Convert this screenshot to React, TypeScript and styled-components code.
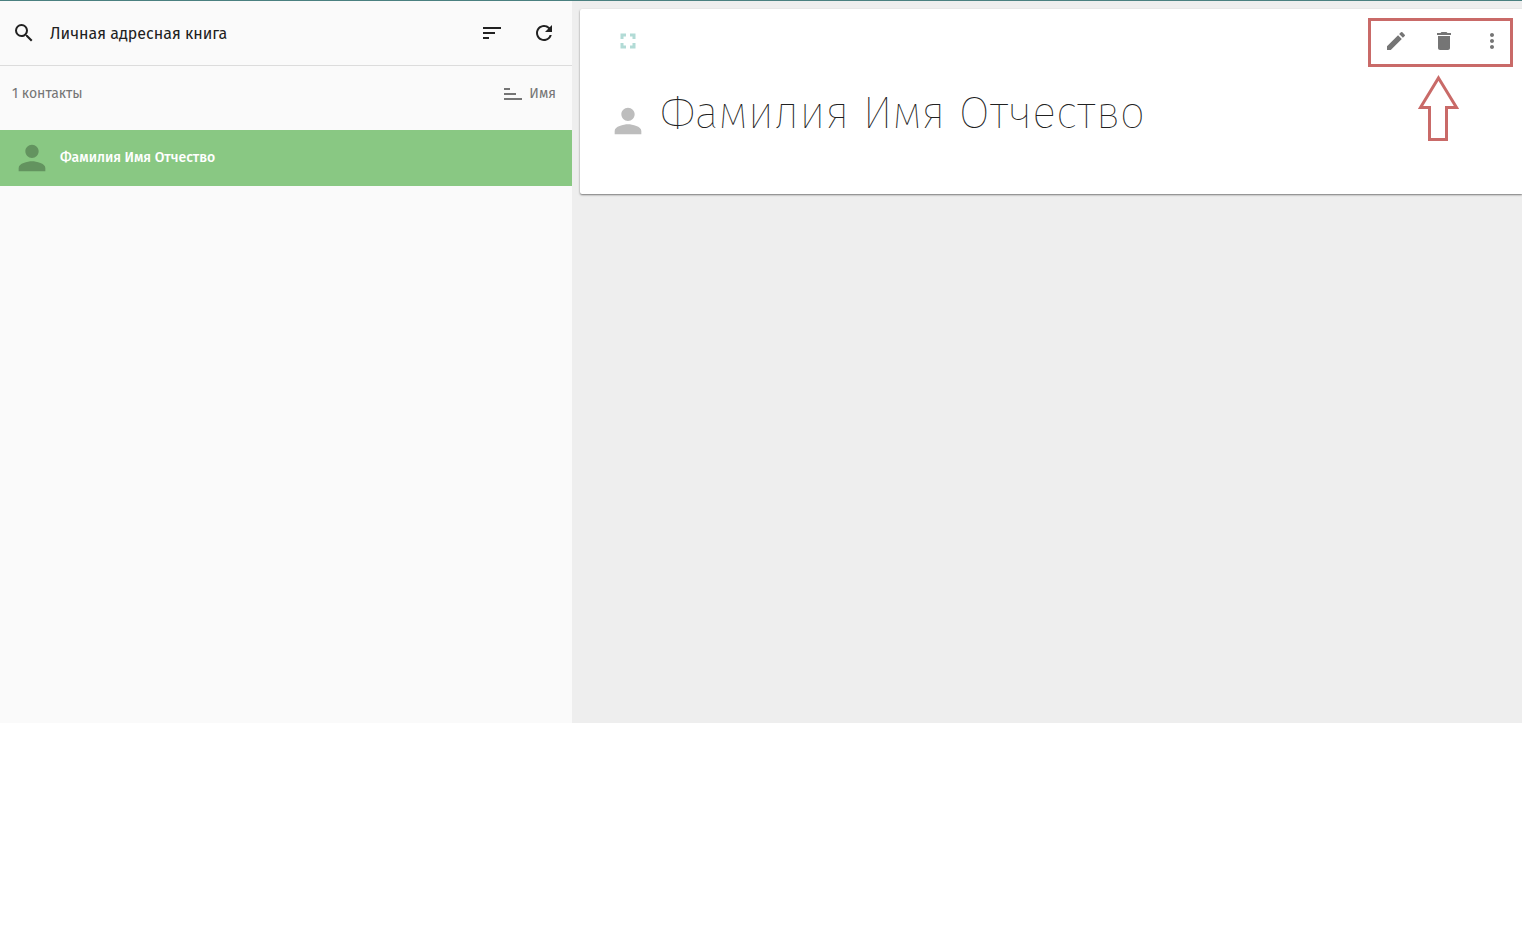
import React from "react";
import styled, { createGlobalStyle } from "styled-components";

const GlobalStyle = createGlobalStyle`
  *, *::before, *::after { box-sizing: border-box; }
  body {
    margin: 0;
    background: #ffffff;
    color: #212121;
    font-family: "Fira Sans", "Noto Sans", sans-serif;
    font-size: 16px;
  }
  h1, h2, p, ul { margin: 0; padding: 0; }
`;

const Shell = styled.div`
  display: grid;
  grid-template-columns: minmax(0, 572fr) minmax(0, 950fr);
  min-height: calc(100vh - 208px);
  border-top: 1px solid #4a8080;
  background: #eeeeee;
`;

const Sidebar = styled.aside`
  display: flex;
  flex-direction: column;
  background: #fafafa;
`;

const Toolbar = styled.header`
  display: flex;
  align-items: center;
  height: 65px;
  padding-right: 4px;
  border-bottom: 1px solid #dcdcdc;
`;

const IconButton = styled.button<{ $color?: string }>`
  display: flex;
  flex: none;
  align-items: center;
  justify-content: center;
  width: 48px;
  height: 48px;
  padding: 0;
  border: 0;
  background: transparent;
  color: ${(p) => p.$color ?? "#212121"};
  cursor: pointer;
`;

const BookTitle = styled.h2`
  flex: 1;
  margin-left: 2px;
  padding-top: 2px;
  font-size: 16px;
  font-weight: 400;
  line-height: 24px;
  white-space: nowrap;
`;

const ToolbarActions = styled.div`
  display: flex;
  gap: 4px;
`;

const ListHeader = styled.div`
  display: flex;
  align-items: center;
  justify-content: space-between;
  height: 64px;
  padding: 0 16px 8px 12px;
  color: #757575;
  font-size: 14px;
  line-height: 20px;
`;

const SortButton = styled.button`
  display: flex;
  align-items: center;
  gap: 4px;
  padding: 0;
  border: 0;
  background: transparent;
  color: inherit;
  font: inherit;
  cursor: pointer;
`;

const ContactList = styled.ul`
  list-style: none;
`;

const ContactRow = styled.button`
  display: flex;
  align-items: center;
  gap: 8px;
  width: 100%;
  height: 56px;
  padding: 0 12px;
  border: 0;
  background: #89c883;
  color: #ffffff;
  font: inherit;
  font-size: 14px;
  font-weight: 500;
  line-height: 20px;
  cursor: pointer;
`;

const Avatar = styled.span<{ $color: string }>`
  display: flex;
  color: ${(p) => p.$color};
`;

const Detail = styled.main`
  min-width: 0;
  padding: 8px 0 8px 8px;
`;

const Card = styled.article`
  min-height: 185px;
  padding: 8px 6px 8px 24px;
  border-radius: 2px 0 0 2px;
  background: #ffffff;
  box-shadow: 0 1px 2px rgba(0, 0, 0, 0.5);
`;

const CardBar = styled.div`
  display: flex;
  align-items: center;
  justify-content: space-between;
`;

const Actions = styled.div`
  position: relative;
  display: flex;
`;

const Highlight = styled.div`
  position: absolute;
  top: 1px;
  left: -4px;
  right: 3px;
  height: 49px;
  border: 3px solid #c96a68;
  pointer-events: none;
`;

const Arrow = styled.svg`
  position: absolute;
  top: 58px;
  left: 46px;
  pointer-events: none;
`;

const NameRow = styled.div`
  display: flex;
  align-items: center;
  gap: 12px;
  padding: 16px 0 0 4px;
`;

const ContactName = styled.h1`
  padding-bottom: 16px;
  font-size: 45px;
  font-weight: 100;
  line-height: 64px;
  white-space: nowrap;
`;

const paths = {
  search:
    "M15.5 14h-.79l-.28-.27A6.471 6.471 0 0 0 16 9.5 6.5 6.5 0 1 0 9.5 16c1.61 0 3.09-.59 4.23-1.57l.27.28v.79l5 4.99L20.49 19l-4.99-5zm-6 0C7.01 14 5 11.99 5 9.5S7.01 5 9.5 5 14 7.01 14 9.5 11.99 14 9.5 14z",
  sort: "M3 18h6v-2H3v2zM3 6v2h18V6H3zm0 7h12v-2H3v2z",
  ascending: "M3 6h6v2H3V6zM3 18v-2h18v2H3zm0-7h12v2H3v-2z",
  refresh:
    "M17.65 6.35A7.958 7.958 0 0 0 12 4c-4.42 0-7.99 3.58-7.99 8s3.57 8 7.99 8c3.73 0 6.84-2.55 7.73-6h-2.08A5.99 5.99 0 0 1 12 18c-3.31 0-6-2.69-6-6s2.69-6 6-6c1.66 0 3.14.69 4.22 1.78L13 11h7V4l-2.35 2.35z",
  person:
    "M12 12c2.21 0 4-1.79 4-4s-1.79-4-4-4-4 1.79-4 4 1.79 4 4 4zm0 2c-2.67 0-8 1.34-8 4v2h16v-2c0-2.66-5.33-4-8-4z",
  fullscreen:
    "M7.5 14H4.5v5.5h5.5v-3H7.5V14zM4.5 10h3V7.5h2.5v-3H4.5V10zm12 6.500h-2.500v3h5.500V14h-3v2.500zM14 4.500v3h2.500V10h3V4.500H14z",
  edit: "M3 17.25V21h3.75L17.81 9.94l-3.75-3.75L3 17.25zM20.71 7.04a.996.996 0 0 0 0-1.41l-2.34-2.34a.996.996 0 0 0-1.41 0l-1.83 1.83 3.75 3.75 1.83-1.83z",
  trash: "M6 19c0 1.1.9 2 2 2h8c1.1 0 2-.9 2-2V7H6v12zM19 4h-3.5l-1-1h-5l-1 1H5v2h14V4z",
  more: "M12 8c1.1 0 2-.9 2-2s-.9-2-2-2-2 .9-2 2 .9 2 2 2zm0 2c-1.1 0-2 .9-2 2s.9 2 2 2 2-.9 2-2-.9-2-2-2zm0 6c-1.1 0-2 .9-2 2s.9 2 2 2 2-.9 2-2-.9-2-2-2z",
};

function Icon({ name, size = 24 }: { name: keyof typeof paths; size?: number }) {
  return (
    <svg width={size} height={size} viewBox="0 0 24 24" fill="currentColor" aria-hidden="true">
      <path d={paths[name]} />
    </svg>
  );
}

export default function App() {
  return (
    <>
      <GlobalStyle />
      <Shell>
        <Sidebar>
          <Toolbar>
            <IconButton aria-label="Поиск">
              <Icon name="search" />
            </IconButton>
            <BookTitle>Личная адресная книга</BookTitle>
            <ToolbarActions>
              <IconButton aria-label="Сортировка">
                <Icon name="sort" />
              </IconButton>
              <IconButton aria-label="Обновить">
                <Icon name="refresh" />
              </IconButton>
            </ToolbarActions>
          </Toolbar>
          <ListHeader>
            <p>1 контакты</p>
            <SortButton>
              <Icon name="ascending" />
              Имя
            </SortButton>
          </ListHeader>
          <ContactList>
            <li>
              <ContactRow>
                <Avatar $color="#63935f">
                  <Icon name="person" size={40} />
                </Avatar>
                Фамилия Имя Отчество
              </ContactRow>
            </li>
          </ContactList>
        </Sidebar>
        <Detail>
          <Card>
            <CardBar>
              <IconButton $color="#b2dbd6" aria-label="Развернуть">
                <Icon name="fullscreen" />
              </IconButton>
              <Actions>
                <IconButton $color="#757575" aria-label="Изменить">
                  <Icon name="edit" />
                </IconButton>
                <IconButton $color="#757575" aria-label="Удалить">
                  <Icon name="trash" />
                </IconButton>
                <IconButton $color="#757575" aria-label="Ещё">
                  <Icon name="more" />
                </IconButton>
                <Highlight />
                <Arrow width="42" height="68" viewBox="0 0 42 68" fill="none" stroke="#c96a68" strokeWidth="3">
                  <path d="M20.5 3L38.5 32.5H28.5V64.5H11.5V32.5H2.500Z" />
                </Arrow>
              </Actions>
            </CardBar>
            <NameRow>
              <Avatar $color="#bdbdbd">
                <Icon name="person" size={40} />
              </Avatar>
              <ContactName>Фамилия Имя Отчество</ContactName>
            </NameRow>
          </Card>
        </Detail>
      </Shell>
    </>
  );
}
